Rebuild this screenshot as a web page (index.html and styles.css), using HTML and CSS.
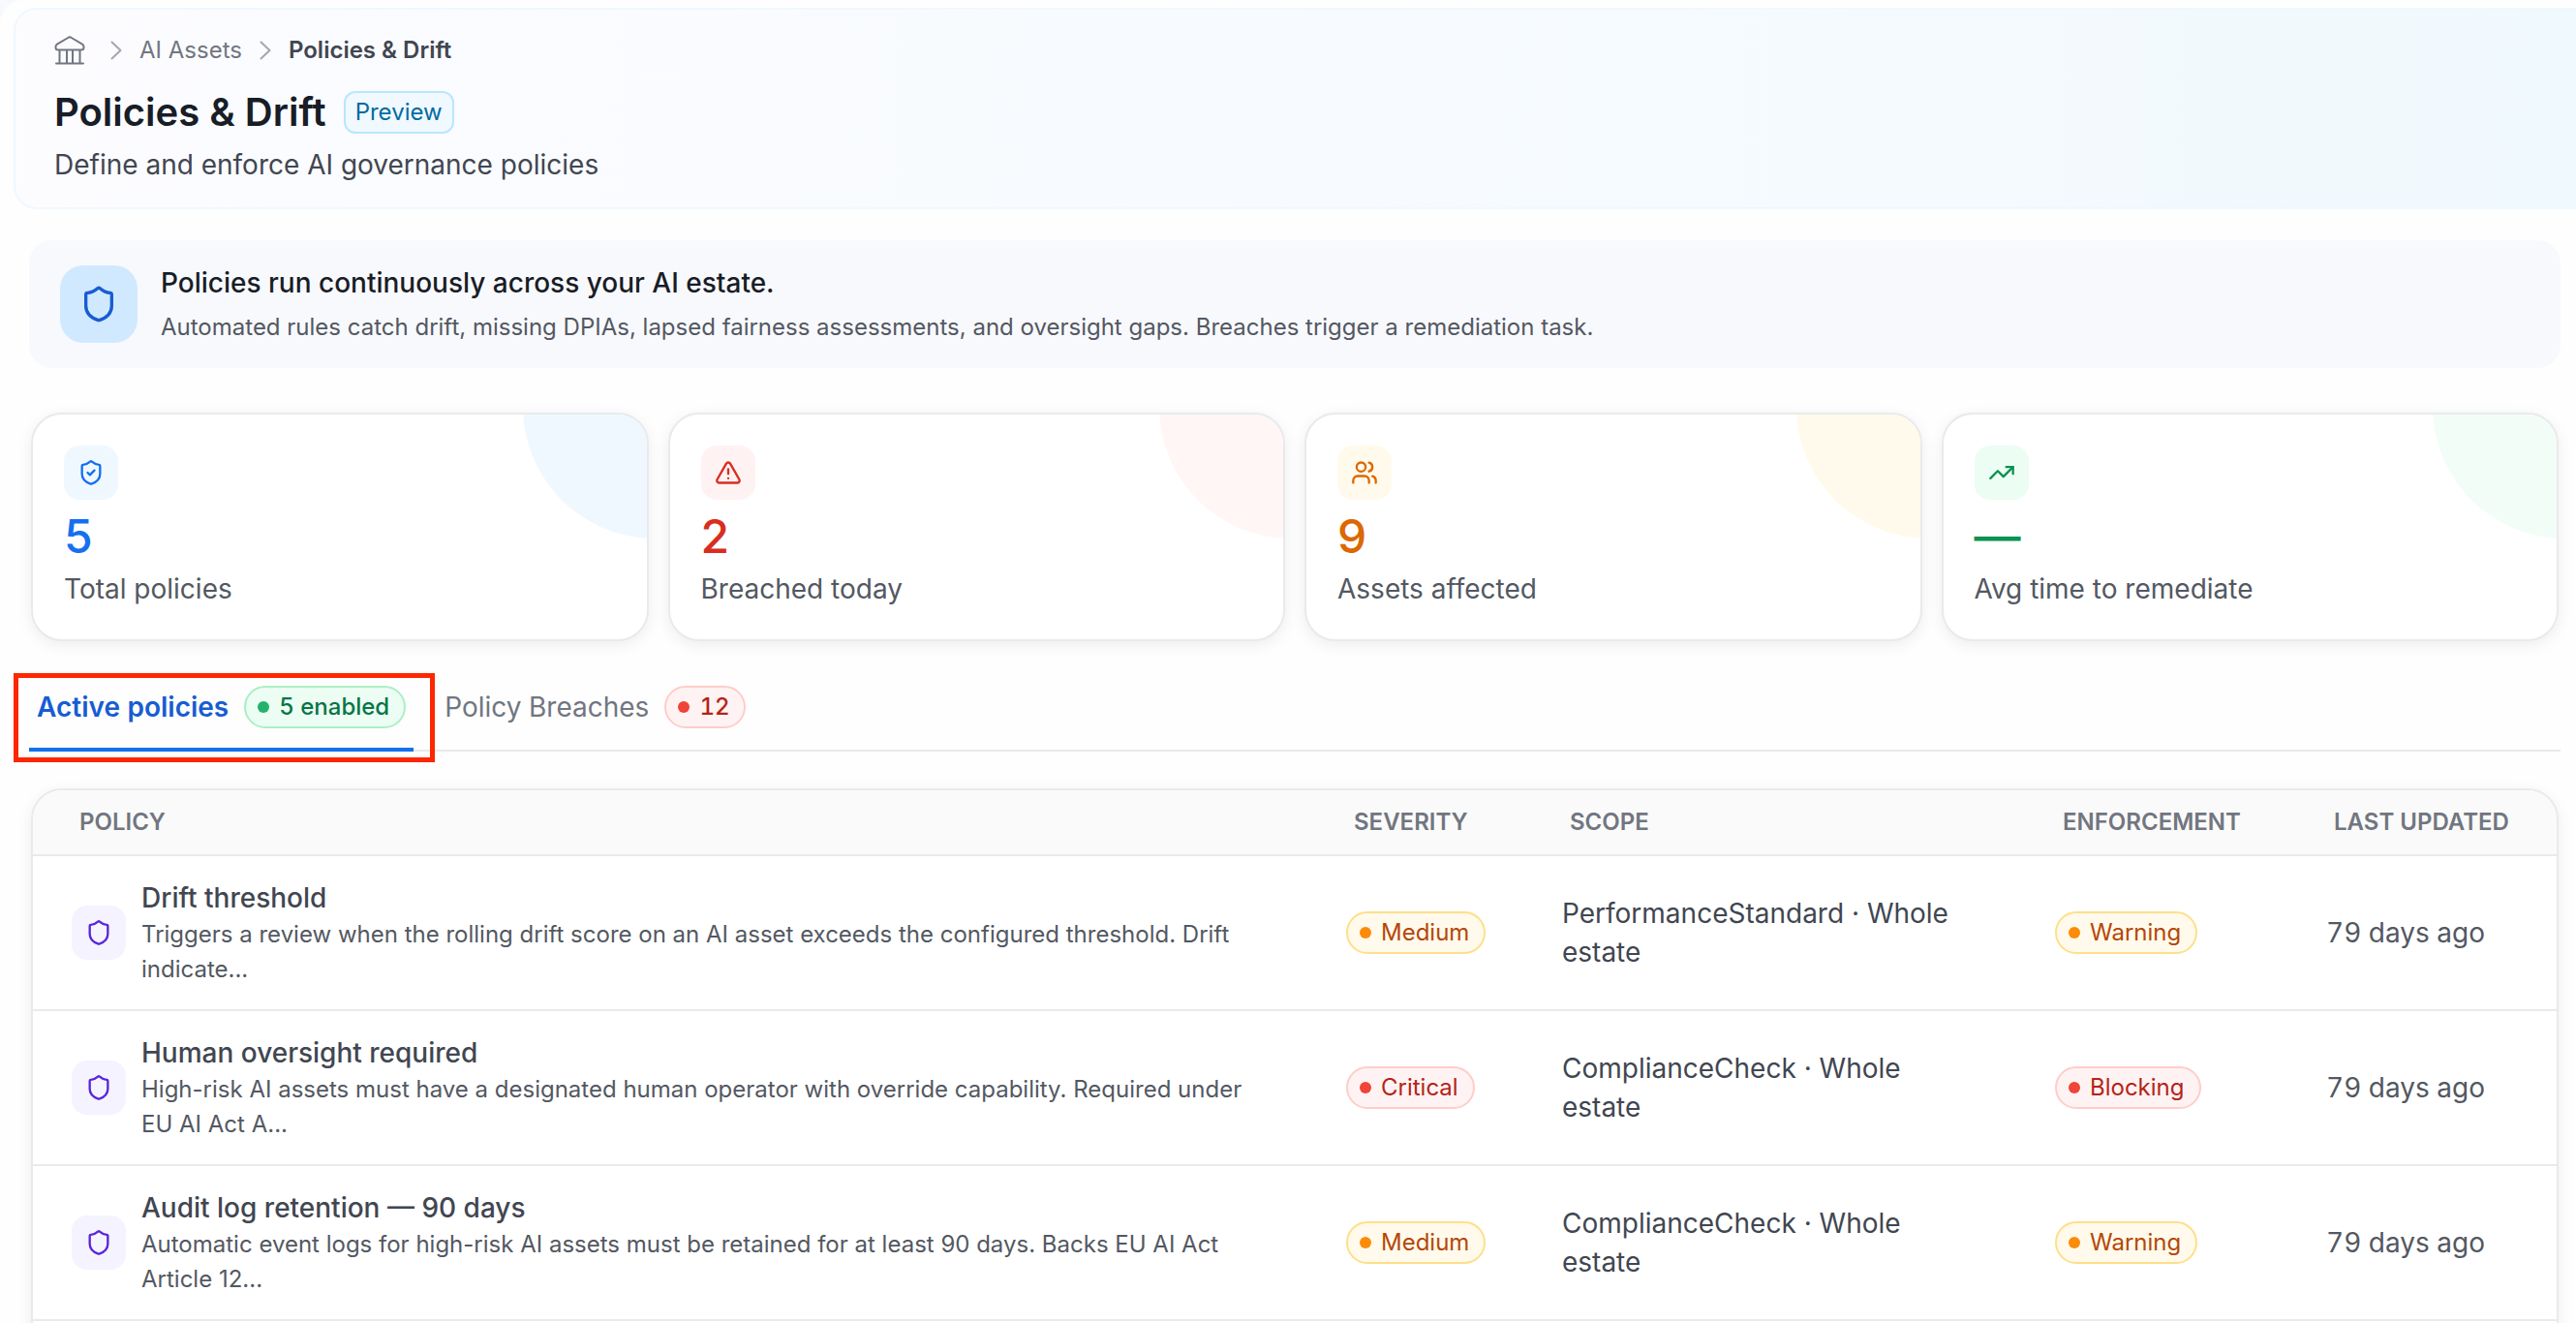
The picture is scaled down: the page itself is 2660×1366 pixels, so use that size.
FILE: index.html
```html
<!DOCTYPE html>
<html lang="en">

<head>
    <meta charset="UTF-8">
    <meta name="viewport" content="width=device-width, initial-scale=1">
    <link rel="stylesheet" href="styles.css">

    <title>Policies &amp; Drift</title>
</head>

<body>
    <!-- shared icon shapes -->
    <svg class="sprite" aria-hidden="true">
        <symbol id="icon-shield" viewBox="0 0 24 24">
            <path d="M20 13c0 5-3.500 7.500-7.660 8.950a1 1 0 0 1-.67-.01C7.500 20.500 4 18 4 13V6a1 1 0 0 1 1-1c2 0 4.500-1.200 6.240-2.720a1.170 1.170 0 0 1 1.520 0C14.510 3.810 17 5 19 5a1 1 0 0 1 1 1z" />
        </symbol>
        <symbol id="icon-chevron" viewBox="0 0 12 20">
            <path d="m1.500 1.500 9 8.500-9 8.500" />
        </symbol>
    </svg>

    <header class="page-header">
        <nav class="breadcrumb" aria-label="Breadcrumb">
            <a class="home" href="#" aria-label="Home">
                <svg class="home-icon" viewBox="0 0 32 30">
                    <path d="M4 14.500h24a2.500 2.500 0 0 0 2.500-2.500v-.8a3 3 0 0 0-1.500-2.500L17.800 2a3 3 0 0 0-3.600 0L3 8.700a3 3 0 0 0-1.500 2.500v.8A2.500 2.500 0 0 0 4 14.500zM5.500 14.500V28M13 14.500V28M19 14.500V28M26.500 14.500V28M2 28.500h28" />
                </svg>
            </a>
            <svg class="chevron" aria-hidden="true"><use href="#icon-chevron" /></svg>
            <a href="#">AI Assets</a>
            <svg class="chevron" aria-hidden="true"><use href="#icon-chevron" /></svg>
            <span class="current" aria-current="page">Policies &amp; Drift</span>
        </nav>
        <div class="title-row">
            <h1>Policies &amp; Drift</h1>
            <span class="tag">Preview</span>
        </div>
        <p class="subtitle">Define and enforce AI governance policies</p>
    </header>

    <main class="content">
        <section class="banner">
            <div class="banner-icon">
                <svg class="icon"><use href="#icon-shield" /></svg>
            </div>
            <div>
                <h2>Policies run continuously across your AI estate.</h2>
                <p>Automated rules catch drift, missing DPIAs, lapsed fairness assessments, and oversight gaps. Breaches trigger a remediation task.</p>
            </div>
        </section>

        <section class="stats">
            <div class="stat blue">
                <div class="icon-box">
                    <svg class="icon" viewBox="0 0 24 24">
                        <use href="#icon-shield" />
                        <path d="m9 12 2 2 4-4" />
                    </svg>
                </div>
                <div class="stat-value">5</div>
                <div class="stat-label">Total policies</div>
            </div>
            <div class="stat red">
                <div class="icon-box">
                    <svg class="icon" viewBox="0 0 24 24">
                        <path d="m21.730 18-8-14a2 2 0 0 0-3.480 0l-8 14A2 2 0 0 0 4 21h16a2 2 0 0 0 1.730-3M12 9v4M12 17h.01" />
                    </svg>
                </div>
                <div class="stat-value">2</div>
                <div class="stat-label">Breached today</div>
            </div>
            <div class="stat amber">
                <div class="icon-box">
                    <svg class="icon" viewBox="0 0 24 24">
                        <path d="M16 21v-2a4 4 0 0 0-4-4H6a4 4 0 0 0-4 4v2" />
                        <circle cx="9" cy="7" r="4" />
                        <path d="M22 21v-2a4 4 0 0 0-3-3.870M16 3.130a4 4 0 0 1 0 7.750" />
                    </svg>
                </div>
                <div class="stat-value">9</div>
                <div class="stat-label">Assets affected</div>
            </div>
            <div class="stat green">
                <div class="icon-box">
                    <svg class="icon" viewBox="0 0 24 24">
                        <path d="M16 7h6v6" />
                        <path d="m22 7-8.500 8.500-5-5L2 17" />
                    </svg>
                </div>
                <div class="stat-value">—</div>
                <div class="stat-label">Avg time to remediate</div>
            </div>
        </section>

        <div class="tabs" role="tablist">
            <button class="tab active" type="button" role="tab" aria-selected="true">
                Active policies
                <span class="pill green">5 enabled</span>
            </button>
            <button class="tab" type="button" role="tab" aria-selected="false">
                Policy Breaches
                <span class="pill red">12</span>
            </button>
        </div>

        <div class="table-card">
            <table class="policies">
                <thead>
                    <tr>
                        <th class="col-policy">Policy</th>
                        <th class="col-severity">Severity</th>
                        <th class="col-scope">Scope</th>
                        <th class="col-enforcement">Enforcement</th>
                        <th class="col-updated">Last updated</th>
                    </tr>
                </thead>
                <tbody>
                    <tr>
                        <td>
                            <div class="policy">
                                <div class="icon-box violet"><svg class="icon"><use href="#icon-shield" /></svg></div>
                                <div>
                                    <div class="policy-name">Drift threshold</div>
                                    <div class="policy-text">Triggers a review when the rolling drift score on an AI asset exceeds the configured threshold. Drift indicate...</div>
                                </div>
                            </div>
                        </td>
                        <td><span class="pill amber">Medium</span></td>
                        <td>PerformanceStandard · Whole estate</td>
                        <td><span class="pill amber">Warning</span></td>
                        <td class="updated">79 days ago</td>
                    </tr>
                    <tr>
                        <td>
                            <div class="policy">
                                <div class="icon-box violet"><svg class="icon"><use href="#icon-shield" /></svg></div>
                                <div>
                                    <div class="policy-name">Human oversight required</div>
                                    <div class="policy-text">High-risk AI assets must have a designated human operator with override capability. Required under EU AI Act A...</div>
                                </div>
                            </div>
                        </td>
                        <td><span class="pill red">Critical</span></td>
                        <td>ComplianceCheck · Whole estate</td>
                        <td><span class="pill red">Blocking</span></td>
                        <td class="updated">79 days ago</td>
                    </tr>
                    <tr>
                        <td>
                            <div class="policy">
                                <div class="icon-box violet"><svg class="icon"><use href="#icon-shield" /></svg></div>
                                <div>
                                    <div class="policy-name">Audit log retention — 90 days</div>
                                    <div class="policy-text">Automatic event logs for high-risk AI assets must be retained for at least 90 days. Backs EU AI Act Article 12...</div>
                                </div>
                            </div>
                        </td>
                        <td><span class="pill amber">Medium</span></td>
                        <td>ComplianceCheck · Whole estate</td>
                        <td><span class="pill amber">Warning</span></td>
                        <td class="updated">79 days ago</td>
                    </tr>
                </tbody>
            </table>
        </div>
    </main>
</body>

</html>
```
FILE: styles.css
```css
@charset "UTF-8";

/* ========BASIC======== */
* {
    box-sizing: border-box;
}

html {
    background: #f8f9fd;
}

body {
    height: 100vh;
    margin: 0;
    padding: 8px 0 0 14px;
    overflow: hidden;
    font-family: Inter, "Liberation Sans", sans-serif;
    font-size: 28px;
    line-height: 40px;
    color: #414651;
    background: #fefefe;
    border-top-left-radius: 24px;
}

h1,
h2,
p {
    margin: 0;
}

a {
    color: inherit;
    text-decoration: none;
}

svg {
    display: block;
    fill: none;
    stroke: currentColor;
    stroke-width: 2;
    stroke-linecap: round;
    stroke-linejoin: round;
}

.sprite {
    position: absolute;
    width: 0;
    height: 0;
}

.icon {
    width: 28px;
    height: 28px;
}

.icon-box {
    display: flex;
    flex: none;
    align-items: center;
    justify-content: center;
    width: 56px;
    height: 56px;
    border-radius: 16px;
}


/* ========HEADER======== */
.page-header {
    padding: 24px 40px;
    border: 2px solid #eff8ff;
    border-right: 0;
    border-radius: 24px 0 0 24px;
    background: linear-gradient(90deg, #fcfcff, #f5fafe 70%, #f0f9fd);
}

.breadcrumb {
    display: flex;
    align-items: center;
    height: 36px;
    gap: 18px;
    font-size: 24px;
    color: #717680;
}

.breadcrumb .current {
    font-weight: 600;
    color: #414651;
}

.home {
    margin-right: 8px;
}

.home-icon {
    width: 32px;
    height: 30px;
}

.chevron {
    width: 12px;
    height: 20px;
    color: #a4a7ae;
}

.title-row {
    display: flex;
    align-items: center;
    height: 60px;
    margin-top: 16px;
    gap: 18px;
}

h1 {
    font-size: 40px;
    font-weight: 600;
    color: #181d27;
}

.tag {
    padding: 2px 10px;
    font-size: 24px;
    line-height: 36px;
    color: #026aa2;
    background: #f0f9ff;
    border: 2px solid #b9e6fe;
    border-radius: 12px;
}

.subtitle {
    margin-top: 4px;
}


/* ========BANNER======== */
.content {
    padding: 32px 16px 0;
}

.banner {
    display: flex;
    align-items: center;
    padding: 24px 32px;
    gap: 24px;
    background: #f8f9fd;
    border-radius: 24px;
}

.banner-icon {
    display: flex;
    align-items: center;
    justify-content: center;
    width: 80px;
    height: 80px;
    color: #175cd3;
    background: #d1e9ff;
    border-radius: 24px;
}

.banner-icon .icon {
    width: 40px;
    height: 40px;
}

.banner h2 {
    font-size: 28px;
    font-weight: 500;
    color: #181d27;
}

.banner p {
    margin-top: 8px;
    font-size: 24px;
    line-height: 36px;
    color: #535862;
}


/* ========STATS======== */
.stats {
    display: grid;
    grid-template-columns: repeat(4, 1fr);
    margin-top: 46px;
    padding: 0 2px;
    gap: 20px;
}

.stat {
    position: relative;
    overflow: hidden;
    padding: 32px;
    background: #fff;
    border: 2px solid #e9eaeb;
    border-radius: 32px;
    box-shadow: 0 4px 16px rgba(10, 13, 18, 0.07);
}

/* tinted circle in the card corner */
.stat::after {
    content: "";
    position: absolute;
    top: -144px;
    right: -144px;
    width: 272px;
    height: 272px;
    border-radius: 50%;
}

.stat-value {
    margin-top: 8px;
    font-size: 48px;
    font-weight: 500;
    line-height: 60px;
}

.stat-label {
    margin-top: 4px;
    color: #535862;
}

.stat.blue {
    color: #1570ef;
}

.stat.blue .icon-box,
.stat.blue::after {
    background: #f0f8ff;
}

.stat.red {
    color: #d92d20;
}

.stat.red .icon-box {
    background: #fef3f2;
}

.stat.red::after {
    background: #fff6f5;
}

.stat.amber {
    color: #dc6803;
}

.stat.amber .icon-box,
.stat.amber::after {
    background: #fffaeb;
}

.stat.green {
    color: #099250;
}

.stat.green .icon-box {
    background: #ecfdf3;
}

.stat.green::after {
    background: #f3fdf8;
}


/* ========TABS======== */
.tabs {
    display: flex;
    margin-top: 38px;
    border-bottom: 2px solid #e9eaeb;
}

.tab {
    display: flex;
    align-items: center;
    margin: 0 24px -2px 0;
    padding: 8px 8px 20px;
    gap: 16px;
    font: inherit;
    font-variant-numeric: tabular-nums;
    color: #717680;
    background: none;
    border: 0;
    border-bottom: 4px solid transparent;
}

/* highlight box around the selected tab */
.tab.active {
    position: relative;
    font-weight: 600;
    color: #175cd3;
    border-color: #1570ef;
}

.tab.active::after {
    content: "";
    position: absolute;
    inset: -5px -22px -15px -16px;
    border: 5px solid #ff2600;
}

.pill {
    display: inline-flex;
    align-items: center;
    padding: 2px 15px 2px 12px;
    gap: 10px;
    font-size: 24px;
    line-height: 36px;
    vertical-align: middle;
    border: 2px solid;
    border-radius: 22px;
}

.pill::before {
    content: "";
    width: 12px;
    height: 12px;
    border-radius: 50%;
}

.tab .pill {
    font-weight: 500;
}

.pill.green {
    color: #067647;
    background: #ecfdf3;
    border-color: #abefc6;
}

.pill.green::before {
    background: #22b26b;
}

.pill.red {
    color: #b42318;
    background: #fef3f2;
    border-color: #fecdca;
}

.pill.red::before {
    background: #f04438;
}

.pill.amber {
    color: #b54708;
    background: #fffaeb;
    border-color: #fedf89;
}

.pill.amber::before {
    background: #fa8c0a;
}


/* ========TABLE======== */
.table-card {
    overflow: hidden;
    margin: 38px 2px 0;
    padding-bottom: 40px;
    background: #fff;
    border: 2px solid #e9eaeb;
    border-radius: 32px;
    box-shadow: 0 4px 16px rgba(10, 13, 18, 0.07);
}

.policies {
    width: 100%;
    table-layout: fixed;
    border-collapse: collapse;
}

.policies th {
    padding: 15px 48px;
    font-size: 24px;
    font-weight: 600;
    line-height: 36px;
    text-align: left;
    text-transform: uppercase;
    white-space: nowrap;
    color: #717680;
    background: #fafafa;
    border-bottom: 2px solid #e9eaeb;
}

.policies td {
    padding: 23px 40px;
    vertical-align: middle;
    border-bottom: 2px solid #e9eaeb;
}

.col-severity {
    width: 223px;
}

.col-scope {
    width: 509px;
}

.col-enforcement {
    width: 280px;
}

.col-updated {
    width: 278px;
}

.policies .updated {
    font-variant-numeric: tabular-nums;
    white-space: nowrap;
    color: #535862;
}

.policy {
    display: flex;
    align-items: center;
    gap: 16px;
}

.policy-name {
    font-weight: 500;
}

.policy-text {
    font-size: 24px;
    line-height: 36px;
    color: #535862;
}

.icon-box.violet {
    color: #5925dc;
    background: #f4f3ff;
}
```
